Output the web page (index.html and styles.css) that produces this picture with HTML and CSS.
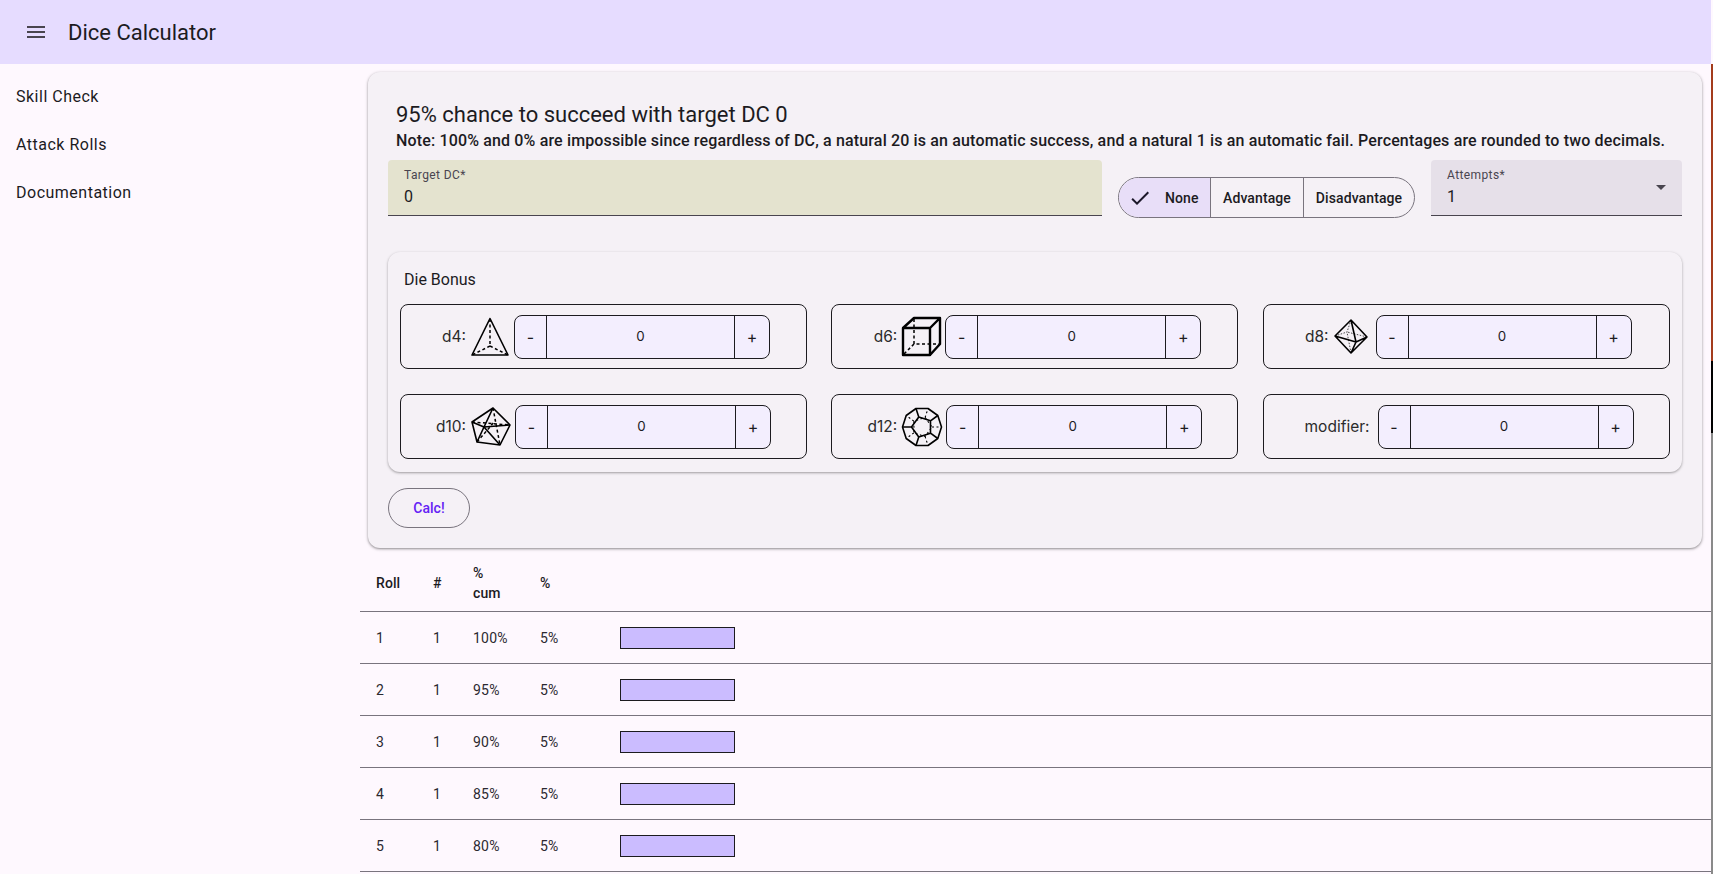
FILE: index.html
```html
<!DOCTYPE html>
<html lang="en">
<head>
    <meta charset="UTF-8">
    <meta name="viewport" content="width=device-width, initial-scale=1.0">
    <title>Dice Calculator</title>

    <link rel="stylesheet" href="styles.css">
</head>
<body>
    <div class="app">
        <header class="toolbar">
            <svg class="menu-icon" viewBox="0 0 24 24"><path d="M3 18h18v-2H3v2zm0-5h18v-2H3v2zm0-7v2h18V6H3z"/></svg>
            <span class="toolbar-title">Dice Calculator</span>
        </header>

        <div class="shell">
            <nav class="sidenav">
                <a class="nav-item">Skill Check</a>
                <a class="nav-item">Attack Rolls</a>
                <a class="nav-item">Documentation</a>
            </nav>

            <main class="content">
                <section class="card">
                    <h2 class="result">95% chance to succeed with target DC 0</h2>
                    <p class="note">Note: 100% and 0% are impossible since regardless of DC, a natural 20 is an automatic success, and a natural 1 is an automatic fail. Percentages are rounded to two decimals.</p>

                    <div class="form-row">
                        <div class="field field-target">
                            <span class="field-label">Target DC*</span>
                            <span class="field-value">0</span>
                        </div>
                        <div class="toggle-group">
                            <button class="toggle toggle-none is-checked">
                                <svg class="check-icon" viewBox="0 0 24 24"><path d="M9 16.17 4.83 12l-1.42 1.41L9 19 21 7l-1.41-1.41z"/></svg>
                                None
                            </button>
                            <button class="toggle toggle-adv">Advantage</button>
                            <button class="toggle toggle-dis">Disadvantage</button>
                        </div>
                        <div class="field field-attempts">
                            <span class="field-label">Attempts*</span>
                            <span class="field-value">1</span>
                            <span class="select-arrow"></span>
                        </div>
                    </div>

                    <section class="bonus-card">
                        <h3 class="bonus-title">Die Bonus</h3>
                        <div class="die-grid">
                            <div class="die">
                                <label class="die-label">d4:</label>
                                <svg class="die-icon icon-d4" viewBox="0 0 38 39">
                                    <path class="edge" d="M19 1.500 1 38h36z"/>
                                    <path class="hidden-edge" d="M19 2v27M19 29 1 38M19 29l18 9"/>
                                </svg>
                                <div class="stepper">
                                    <button class="step step-minus">-</button>
                                    <span class="step-value">0</span>
                                    <button class="step step-plus">+</button>
                                </div>
                            </div>
                            <div class="die">
                                <label class="die-label">d6:</label>
                                <svg class="die-icon icon-d6" viewBox="0 0 39 39">
                                    <path class="edge heavy" d="M1 11h27v27H1zM1 11 12 1h26v26L28 38M28 11 38 1"/>
                                    <path class="hidden-edge" d="M12 2v25h25M12 27 2 37"/>
                                </svg>
                                <div class="stepper">
                                    <button class="step step-minus">-</button>
                                    <span class="step-value">0</span>
                                    <button class="step step-plus">+</button>
                                </div>
                            </div>
                            <div class="die die-end">
                                <label class="die-label">d8:</label>
                                <svg class="die-icon icon-d8" viewBox="0 0 34 35">
                                    <path class="edge" d="M17 1 1 17l16 17 16-16zM17 1l5 22M1 17l21 6M33 18l-11 5M17 34l5-11"/>
                                    <path class="hidden-edge thin" d="M17 1l-4 12M1 17l12-4M33 18 13 13M17 34l-4-21"/>
                                </svg>
                                <div class="stepper">
                                    <button class="step step-minus">-</button>
                                    <span class="step-value">0</span>
                                    <button class="step step-plus">+</button>
                                </div>
                            </div>
                            <div class="die die-low">
                                <label class="die-label">d10:</label>
                                <svg class="die-icon icon-d10" viewBox="0 0 40 40">
                                    <path class="edge" d="M1 15 22 1l17 17-10 20-23-3zM1 15l12 5M22 1l-9 19M39 18l-26 2M29 38 13 20M6 35l7-15"/>
                                    <path class="hidden-edge" d="M1 15l38 3M22 1l7 37M6 35l18-21"/>
                                </svg>
                                <div class="stepper">
                                    <button class="step step-minus">-</button>
                                    <span class="step-value">0</span>
                                    <button class="step step-plus">+</button>
                                </div>
                            </div>
                            <div class="die die-low">
                                <label class="die-label">d12:</label>
                                <svg class="die-icon icon-d12" viewBox="0 0 40 40">
                                    <path class="edge" d="M14 1.500h12l9.800 7L39.500 20l-3.700 11.500L26 38.500H14l-9.800-7L.5 20 4.200 8.500z"/>
                                    <path class="edge" d="M16.760 10 28.490 13.830v12.340L16.760 30 9.500 20zM16.760 10 14 1.500M28.490 13.830l7.310-5.330M28.490 26.170l7.310 5.330M16.760 30 14 38.500M9.500 20h-9"/>
                                    <path class="hidden-edge fine" d="M23.090 10.490 30 20l-6.910 9.510-11.180-3.630V14.120zM23.090 10.490 26 1.500M30 20h9.500M23.090 29.510 26 38.500M11.910 25.880 4.200 31.500M11.910 14.120 4.200 8.500"/>
                                </svg>
                                <div class="stepper">
                                    <button class="step step-minus">-</button>
                                    <span class="step-value">0</span>
                                    <button class="step step-plus">+</button>
                                </div>
                            </div>
                            <div class="die die-low">
                                <label class="die-label die-label-text">modifier:</label>
                                <div class="stepper">
                                    <button class="step step-minus">-</button>
                                    <span class="step-value">0</span>
                                    <button class="step step-plus">+</button>
                                </div>
                            </div>
                        </div>
                    </section>

                    <button class="calc-btn">Calc!</button>
                </section>

                <table class="rolls">
                    <thead>
                        <tr>
                            <th class="col-roll">Roll</th>
                            <th class="col-count">#</th>
                            <th class="col-cum">%<br>cum</th>
                            <th class="col-pct">%</th>
                            <th></th>
                        </tr>
                    </thead>
                    <tbody>
                        <tr><td>1</td><td>1</td><td>100%</td><td>5%</td><td class="bar-cell"><div class="bar"></div></td></tr>
                        <tr><td>2</td><td>1</td><td>95%</td><td>5%</td><td class="bar-cell"><div class="bar"></div></td></tr>
                        <tr><td>3</td><td>1</td><td>90%</td><td>5%</td><td class="bar-cell"><div class="bar"></div></td></tr>
                        <tr><td>4</td><td>1</td><td>85%</td><td>5%</td><td class="bar-cell"><div class="bar"></div></td></tr>
                        <tr><td>5</td><td>1</td><td>80%</td><td>5%</td><td class="bar-cell"><div class="bar"></div></td></tr>
                    </tbody>
                </table>
            </main>
        </div>
    </div>
    <div class="window-edge"></div>
</body>
</html>
```

FILE: styles.css
```css
* {
    box-sizing: border-box;
}

html, body {
    height: 100%;
}

body {
    margin: 0;
    display: flex;
    overflow: hidden;
    background: #fef8fe;
    color: #1c1b1f;
    font-family: Roboto, "Liberation Sans", sans-serif;
}

.app {
    flex: 1;
    min-width: 0;
}

.window-edge {
    width: 2px;
    background: linear-gradient(#fef8fe 0, #fef8fe 64px, #a33c1c 64px, #a33c1c 361px, #000 361px, #000 433px, #8a8a8a 433px);
}

/* toolbar */
.toolbar {
    height: 64px;
    display: flex;
    align-items: center;
    background: #e6dcff;
}

.menu-icon {
    width: 24px;
    height: 24px;
    margin-left: 24px;
    fill: #49454f;
}

.toolbar-title {
    margin-left: 20px;
    font-size: 22px;
}

.shell {
    display: flex;
}

/* side menu */
.sidenav {
    width: 360px;
    flex: none;
    padding-top: 9px;
}

.nav-item {
    display: block;
    height: 48px;
    line-height: 48px;
    padding-left: 16px;
    font-size: 16px;
    letter-spacing: 0.5px;
}

.content {
    flex: 1;
    min-width: 0;
}

/* main card */
.card {
    height: 476px;
    margin: 8px 9px 8px 8px;
    padding: 28px 20px 0;
    background: #f5f1f6;
    border-radius: 12px;
    box-shadow: 0 1px 3px 1px rgba(0, 0, 0, 0.12), 0 1px 2px rgba(0, 0, 0, 0.3);
}

.result {
    margin: 0 0 0 8px;
    font-size: 22px;
    font-weight: 400;
    line-height: 30px;
}

.note {
    margin: 1px 0 9px 8px;
    font-size: 16px;
    font-weight: 500;
    line-height: 20px;
    letter-spacing: 0.15px;
    white-space: nowrap;
}

.form-row {
    display: flex;
    align-items: flex-start;
    gap: 16px;
}

.field {
    position: relative;
    height: 56px;
    padding: 7px 16px 0;
    border-bottom: 1px solid #49454f;
    border-radius: 4px 4px 0 0;
}

.field-target {
    flex: none;
    width: 714px;
    background: #e4e3cf;
}

.field-attempts {
    flex: none;
    width: 251px;
    background: #e6e0e9;
}

.field-label {
    display: block;
    font-size: 12px;
    line-height: 16px;
    letter-spacing: 0.4px;
    color: #49454f;
}

.field-value {
    display: block;
    margin-top: 2px;
    font-size: 16px;
    line-height: 24px;
    letter-spacing: 0.5px;
}

.select-arrow {
    position: absolute;
    right: 16px;
    top: 25px;
    border-left: 5px solid transparent;
    border-right: 5px solid transparent;
    border-top: 5px solid #49454f;
}

.toggle-group {
    flex: none;
    display: flex;
    width: 297px;
    height: 41px;
    margin-top: 17px;
    border: 1px solid #79747e;
    border-radius: 21px;
    overflow: hidden;
}

.toggle {
    display: flex;
    align-items: center;
    justify-content: center;
    padding: 0;
    border: 0;
    border-left: 1px solid #79747e;
    background: transparent;
    color: #1c1b1f;
    font-family: inherit;
    font-size: 14px;
    font-weight: 500;
    letter-spacing: 0.1px;
}

.toggle-none {
    width: 91px;
    border-left: 0;
    padding-left: 9px;
    justify-content: flex-start;
    gap: 13px;
}

.toggle-adv {
    width: 93px;
}

.toggle-dis {
    width: 111px;
}

.is-checked {
    background: #e8def8;
}

.check-icon {
    width: 24px;
    height: 24px;
    fill: #1d192b;
}

/* die bonus */
.bonus-card {
    height: 220px;
    margin-top: 34px;
    padding: 12px 12.5px 0 12px;
    background: #f5f1f6;
    border-radius: 12px;
    box-shadow: 0 1px 3px 1px rgba(0, 0, 0, 0.08), 0 1px 2px rgba(0, 0, 0, 0.25);
}

.bonus-title {
    margin: 0 0 0 4px;
    font-size: 16px;
    font-weight: 400;
    line-height: 32px;
}

.die-grid {
    display: grid;
    grid-template-columns: repeat(3, 407px);
    grid-auto-rows: 65px;
    justify-content: space-between;
    row-gap: 25px;
    margin-top: 8px;
}

.die {
    display: flex;
    align-items: center;
    justify-content: flex-end;
    padding-right: 36px;
    border: 1px solid #1c1b1f;
    border-radius: 8px;
}

.die-low {
    padding-right: 35px;
}

.die-end {
    padding-right: 37px;
}

.die-label {
    margin-right: 5px;
    font-family: Inter, "Liberation Sans", sans-serif;
    font-size: 15.5px;
    color: #2b2b2b;
}

.die-label-text {
    margin-right: 8px;
}

.die-icon {
    flex: none;
    width: 38px;
    height: 39px;
    margin-right: 5px;
    overflow: visible;
}

.icon-d6 {
    width: 39px;
    margin-right: 4px;
}

.icon-d8 {
    width: 34px;
    height: 35px;
    margin-right: 8px;
}

.icon-d10, .icon-d12 {
    width: 40px;
    height: 40px;
    margin-right: 4px;
}

.edge {
    fill: none;
    stroke: #000;
    stroke-width: 1.6;
    stroke-linejoin: round;
}

.edge.heavy {
    stroke-width: 2.4;
}

.hidden-edge {
    fill: none;
    stroke: #000;
    stroke-width: 1.5;
    stroke-dasharray: 3 2.5;
}

.hidden-edge.thin {
    stroke-width: 0.7;
    stroke-dasharray: 1.500 1.500;
}

.hidden-edge.fine {
    stroke-width: 1.1;
    stroke-dasharray: 2 2.5;
}

.stepper {
    flex: none;
    display: flex;
    width: 256px;
    height: 44px;
    border: 1px solid #1c1b1f;
    border-radius: 8px;
    background: #f3eefe;
    overflow: hidden;
}

.step {
    flex: none;
    padding: 0;
    border: 0;
    background: transparent;
    color: #1c1b1f;
    font-family: Inter, "Liberation Sans", sans-serif;
    font-size: 16px;
}

.step-minus {
    width: 32px;
    border-right: 1px solid #1c1b1f;
}

.step-plus {
    width: 35px;
    border-left: 1px solid #1c1b1f;
}

.step-value {
    flex: 1;
    align-self: center;
    padding-bottom: 2px;
    text-align: center;
    font-family: Inter, "Liberation Sans", sans-serif;
    font-size: 13.33px;
}

.calc-btn {
    display: block;
    width: 82px;
    height: 40px;
    margin-top: 16px;
    padding: 0;
    border: 1px solid #79747e;
    border-radius: 20px;
    background: transparent;
    color: #6422f5;
    font-family: inherit;
    font-size: 14px;
    font-weight: 500;
}

/* results table */
.rolls {
    width: 100%;
    table-layout: fixed;
    border-collapse: collapse;
    font-size: 14px;
    letter-spacing: 0.25px;
}

.rolls th {
    height: 55px;
    padding: 0 0 0 16px;
    text-align: left;
    font-weight: 500;
    line-height: 20px;
    letter-spacing: 0.1px;
    border-bottom: 1px solid #79747e;
}

.rolls td {
    height: 52px;
    padding: 1px 0 0 16px;
    border-bottom: 1px solid #79747e;
    color: #2b2930;
}

.col-roll {
    width: 57px;
}

.col-count {
    width: 40px;
}

.col-cum {
    width: 67px;
}

.col-pct {
    width: 96px;
}

.rolls td.bar-cell {
    padding-left: 0;
}

.bar {
    width: 115px;
    height: 22px;
    background: #cbbcff;
    border: 1px solid #1c1b1f;
}
```
